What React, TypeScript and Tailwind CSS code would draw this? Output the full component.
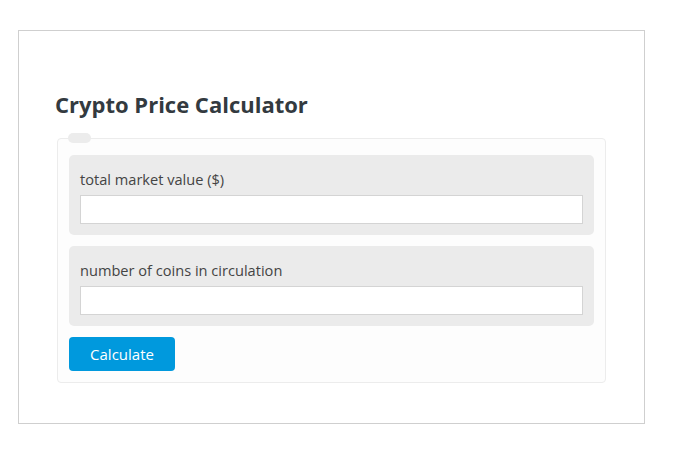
const FIELDS = ['total market value ($)', 'number of coins in circulation'];

function Field({ label }: { label: string }) {
  return (
    <div className="rounded-[5px] bg-[#ebebeb] px-[11px] pb-[11px] pt-[14px]">
      <label className="block text-[14.6px] leading-[20px] text-[#444]">{label}</label>
      <input
        type="text"
        className="mt-[6px] block h-[29px] w-full border border-[#d4d4d4] bg-white px-2 text-[14px] outline-none"
      />
    </div>
  );
}

export default function App() {
  return (
    <div className="min-h-[451px] bg-white pl-[18px] pt-[30px] font-['Open_Sans','Liberation_Sans',sans-serif]">
      <div className="h-[394px] w-[627px] border border-[#cfcfcf] bg-white px-[38px] pt-[58px]">
        <h1 className="ml-[-2px] text-[22px] font-bold leading-[30px] text-[#333a40]">
          Crypto Price Calculator
        </h1>
        <div className="relative mt-[19px] rounded-[4px] border border-[#ececec] bg-[#fdfdfd] px-[11px] pb-[11px] pt-[16px]">
          <span className="absolute left-[10px] top-[-6px] h-[10px] w-[23px] rounded-full bg-[#ececec]" />
          <div className="flex flex-col gap-[11px]">
            {FIELDS.map((f) => (
              <Field key={f} label={f} />
            ))}
          </div>
          <button
            type="button"
            className="mt-[11px] h-[34px] w-[106px] rounded-[4px] bg-[#0099dd] text-[15px] text-white"
          >
            Calculate
          </button>
        </div>
      </div>
    </div>
  );
}
